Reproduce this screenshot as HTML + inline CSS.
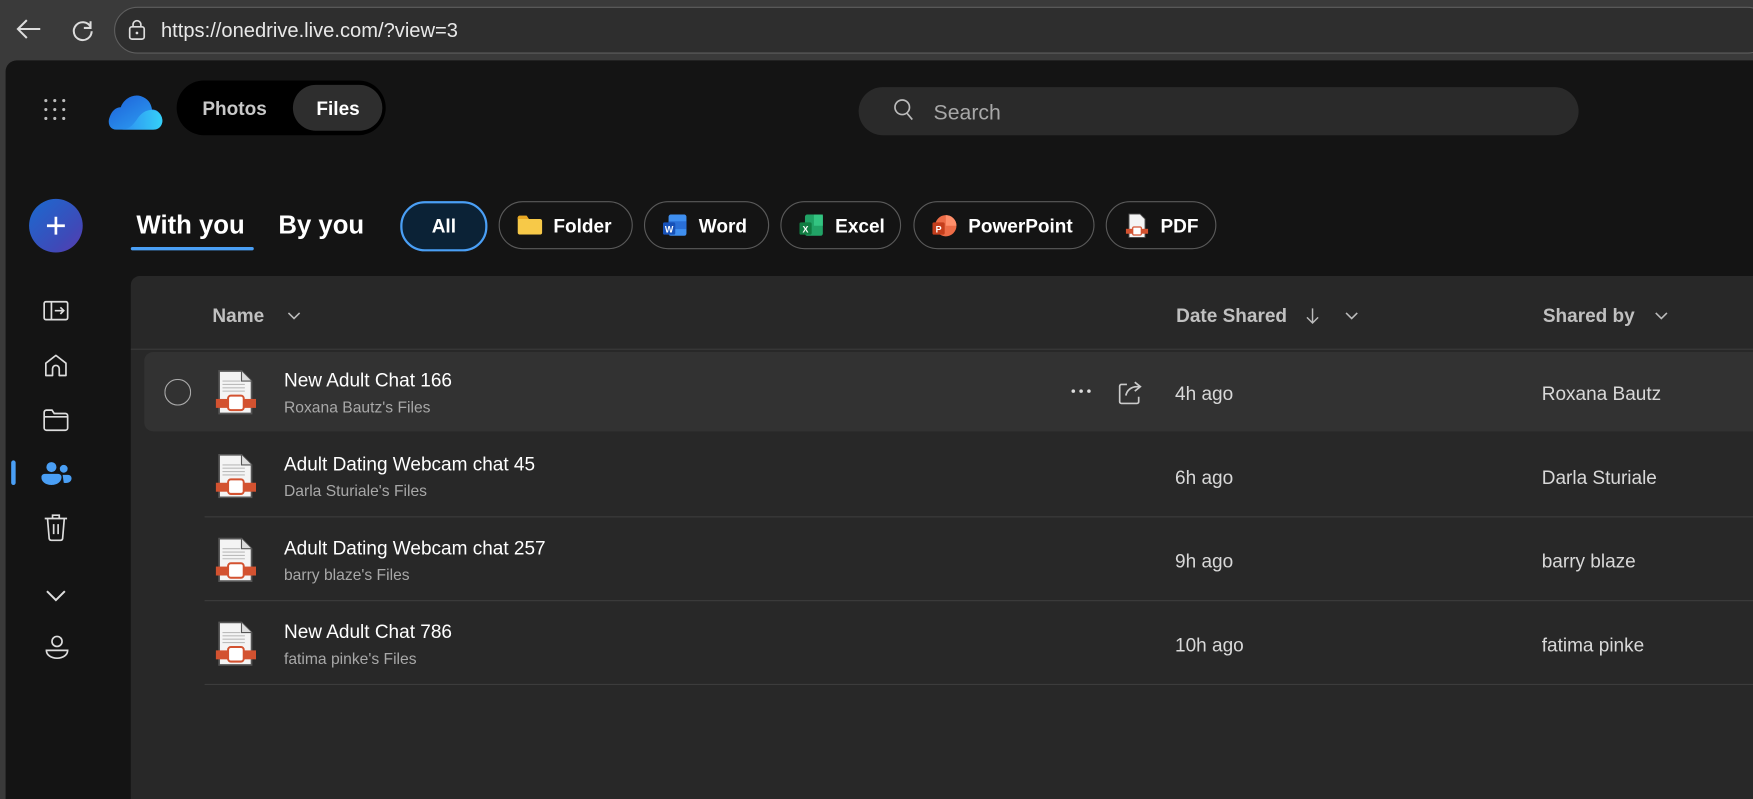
<!DOCTYPE html>
<html><head><meta charset="utf-8"><style>
html,body{margin:0;padding:0;width:1753px;height:799px;overflow:hidden;background:#3a3a3a;font-family:"Segoe UI","Liberation Sans",sans-serif}
#s{position:absolute;left:0;top:0;width:1568px;height:715px;overflow:hidden;transform:scale(1.118,1.1175);transform-origin:0 0;background:#3a3a3a}
.a{position:absolute}
.t{position:absolute;white-space:nowrap;margin-top:2px}
.chip{position:absolute;top:180px;height:41px;border:1px solid #5a5a5a;border-radius:22px;color:#fff;font-weight:bold;font-size:17px;line-height:43px;box-sizing:content-box}
.row .ttl{position:absolute;left:254px;color:#fff;font-size:17px;margin-top:2px}
.row .sub{position:absolute;left:254px;color:#a8a8a8;font-size:14px;margin-top:2px}
.sep{position:absolute;left:183px;right:0;height:1px;background:#3c3c3c}
</style></head><body><div id="s">
<svg class="a" style="left:12px;top:14px" width="28" height="24" viewBox="0 0 28 24"><path d="M24 12H4M12 4L4 12l8 8" stroke="#ddd" stroke-width="1.8" fill="none"/></svg>
<svg class="a" style="left:63px;top:16px" width="22" height="22" viewBox="0 0 22 22"><path d="M18 8A8 8 0 1 0 19 12" stroke="#ddd" stroke-width="1.8" fill="none"/><path d="M18 3v6h-6" stroke="#ddd" stroke-width="1.8" fill="none"/></svg>
<div class="a" style="left:102px;top:6px;width:1480px;height:40px;border:1px solid #5e5e5e;border-radius:21px;background:#2e2e2e"></div>
<svg class="a" style="left:113px;top:16px" width="20" height="22" viewBox="0 0 20 22"><rect x="3" y="8" width="13" height="11" rx="2" stroke="#ddd" stroke-width="1.5" fill="none"/><path d="M6 8V6a3.5 3.5 0 0 1 7 0v2" stroke="#ddd" stroke-width="1.5" fill="none"/><circle cx="9.5" cy="13.5" r="1.2" fill="#ddd"/></svg>
<div class="t" style="left:144px;top:15px;color:#e8e8e8;font-size:18px">https://onedrive.live.com/?view=3</div>
<div class="a" style="left:5px;top:54px;width:1563px;height:661px;background:#141414;border-radius:10px 0 0 0"></div>
<svg class="a" style="left:38px;top:87px" width="22" height="22"><g fill="#bbb"><circle cx="3" cy="3" r="1.4"/><circle cx="11" cy="3" r="1.4"/><circle cx="19" cy="3" r="1.4"/><circle cx="3" cy="11" r="1.4"/><circle cx="11" cy="11" r="1.4"/><circle cx="19" cy="11" r="1.4"/><circle cx="3" cy="19" r="1.4"/><circle cx="11" cy="19" r="1.4"/><circle cx="19" cy="19" r="1.4"/></g></svg>
<svg class="a" style="left:95px;top:82px" width="52" height="36" viewBox="0 0 52 36"><defs><linearGradient id="g1" x1="0" y1="0" x2="1" y2="1"><stop offset="0" stop-color="#1d5fd8"/><stop offset="1" stop-color="#2fa7f5"/></linearGradient><linearGradient id="g2" x1="0" y1="0" x2="1" y2="0"><stop offset="0" stop-color="#2d8df0"/><stop offset="1" stop-color="#35d0f8"/></linearGradient></defs><path d="M9 34C3 34 1 28 3 23C5 17 9 14 13 14C16 6 24 2 31 4C37 6 40 10 41 16C47 16 51 22 50 28C49 32 46 34 42 34Z" fill="url(#g1)"/><path d="M14 34C20 34 24 30 28 24C32 18 38 15 44 17C49 19 51 24 50 28C49 32 46 34 42 34Z" fill="url(#g2)"/></svg>
<div class="a" style="left:158px;top:72px;width:187px;height:49px;background:#000;border-radius:25px"></div>
<div class="a" style="left:262px;top:76px;width:80px;height:41px;background:#2e2e2e;border-radius:21px"></div>
<div class="t" style="left:181px;top:86px;color:#c8c8c8;font-size:17px;font-weight:bold">Photos</div>
<div class="t" style="left:283px;top:86px;color:#fff;font-size:17px;font-weight:bold">Files</div>
<div class="a" style="left:768px;top:78px;width:644px;height:43px;background:#2a2a2a;border-radius:22px"></div>
<svg class="a" style="left:798px;top:88px" width="22" height="22" viewBox="0 0 22 22"><circle cx="9" cy="8" r="6.5" stroke="#bbb" stroke-width="1.5" fill="none"/><path d="M13 13l5 6" stroke="#bbb" stroke-width="1.5"/></svg>
<div class="t" style="left:835px;top:89px;color:#a8a8a8;font-size:19px">Search</div>
<div class="a" style="left:26px;top:178px;width:48px;height:48px;border-radius:50%;background:linear-gradient(135deg,#1b6ad0,#3e4ab8 70%,#5a3bb0)"></div>
<svg class="a" style="left:40px;top:192px" width="20" height="20"><path d="M10 2v16M2 10h16" stroke="#fff" stroke-width="2.4"/></svg>
<div class="t" style="left:122px;top:186px;color:#fff;font-size:23px;font-weight:bold">With you</div>
<div class="a" style="left:117px;top:221px;width:110px;height:3px;background:#4a9ff5;border-radius:2px"></div>
<div class="t" style="left:249px;top:186px;color:#fff;font-size:23px;font-weight:bold">By you</div>
<div class="chip" style="left:358px;width:74px;background:#0b2236;border:2px solid #4a9ff5;line-height:41px;text-align:center">All</div>
<div class="chip" style="left:446px;width:118px"><svg class="a" style="left:16px;top:12px" width="22" height="17"><path d="M0 2a2 2 0 0 1 2-2h6l2 3h10a2 2 0 0 1 2 2v10a2 2 0 0 1-2 2H2a2 2 0 0 1-2-2z" fill="#f7c948"/><path d="M0 2a2 2 0 0 1 2-2h6l2 3H0z" fill="#e9a722"/></svg><span class="a" style="left:48px">Folder</span></div>
<div class="chip" style="left:576px;width:110px"><svg class="a" style="left:16px;top:11px" width="22" height="20"><rect x="5" y="0" width="16" height="19" rx="2" fill="#3f8ff0"/><rect x="5" y="6" width="16" height="7" fill="#2a6fd6"/><rect x="0" y="7" width="11" height="11" rx="1.5" fill="#1751b8"/><text x="5.5" y="16" font-size="8" fill="#fff" text-anchor="middle" font-family="Liberation Sans" font-weight="bold">W</text></svg><span class="a" style="left:48px">Word</span></div>
<div class="chip" style="left:698px;width:106px"><svg class="a" style="left:16px;top:11px" width="22" height="20"><rect x="5" y="0" width="16" height="19" rx="2" fill="#21a366"/><rect x="13" y="0" width="8" height="10" fill="#33c481"/><rect x="0" y="7" width="11" height="11" rx="1.5" fill="#107c41"/><text x="5.5" y="16" font-size="8" fill="#fff" text-anchor="middle" font-family="Liberation Sans" font-weight="bold">X</text></svg><span class="a" style="left:48px">Excel</span></div>
<div class="chip" style="left:817px;width:160px"><svg class="a" style="left:16px;top:11px" width="22" height="20"><circle cx="12" cy="10" r="9.5" fill="#ed6c47"/><path d="M12 .5A9.5 9.5 0 0 1 21.5 10H12z" fill="#ff8f6b"/><rect x="0" y="7" width="11" height="11" rx="1.5" fill="#c43e1c"/><text x="5.5" y="16" font-size="8" fill="#fff" text-anchor="middle" font-family="Liberation Sans" font-weight="bold">P</text></svg><span class="a" style="left:48px">PowerPoint</span></div>
<div class="chip" style="left:989px;width:97px"><svg class="a" style="left:16px;top:10px" width="22" height="22" viewBox="0 0 36 40"><path d="M5 1h18l8 8v30H5z" fill="#f4f4f4" stroke="#555" stroke-width="1.5"/><rect x="0" y="25" width="36" height="8" fill="#d35230"/><rect x="11" y="22" width="14" height="13" rx="2" fill="#fff" stroke="#d35230" stroke-width="2"/></svg><span class="a" style="left:48px">PDF</span></div>
<svg class="a" style="left:38px;top:268px" width="24" height="22" viewBox="0 0 24 22"><rect x="1.5" y="2" width="21" height="16" rx="1.5" stroke="#ddd" stroke-width="1.5" fill="none"/><path d="M8 2v16M11 10h8M16 7l3 3-3 3" stroke="#ddd" stroke-width="1.5" fill="none"/></svg>
<svg class="a" style="left:39px;top:315px" width="22" height="24" viewBox="0 0 22 24"><path d="M2 21V10l9-7 9 7v11h-6v-6a3 3 0 0 0-6 0v6z" stroke="#ddd" stroke-width="1.5" fill="none" stroke-linejoin="round"/></svg>
<svg class="a" style="left:38px;top:365px" width="24" height="22" viewBox="0 0 24 22"><path d="M1.5 4a2 2 0 0 1 2-2h5l2 3h10a2 2 0 0 1 2 2v11a2 2 0 0 1-2 2h-17a2 2 0 0 1-2-2zM1.5 8h21" stroke="#ddd" stroke-width="1.5" fill="none"/></svg>
<div class="a" style="left:10px;top:412px;width:4px;height:22px;background:#4a9ff5;border-radius:2px"></div>
<svg class="a" style="left:37px;top:413px" width="28" height="22" viewBox="0 0 28 22"><circle cx="9" cy="5" r="4.5" fill="#4a9ff5"/><circle cx="20" cy="6.5" r="3.5" fill="#4a9ff5"/><path d="M0 14a3 3 0 0 1 3-3h12a3 3 0 0 1 3 3c0 5-5 7-9 7s-9-2-9-7z" fill="#4a9ff5"/><path d="M19 12h5a3 3 0 0 1 3 3c0 3-3 5-7 4z" fill="#4a9ff5"/></svg>
<svg class="a" style="left:39px;top:459px" width="22" height="26" viewBox="0 0 22 26"><path d="M1 5h20M8 5V2h6v3M3.5 5l1.5 18a2 2 0 0 0 2 1.5h8a2 2 0 0 0 2-1.5L18.5 5M9 10v9M13 10v9" stroke="#ddd" stroke-width="1.5" fill="none"/></svg>
<svg class="a" style="left:40px;top:527px" width="20" height="12"><path d="M2 2l8 8 8-8" stroke="#ddd" stroke-width="1.8" fill="none"/></svg>
<svg class="a" style="left:40px;top:568px" width="22" height="24" viewBox="0 0 22 24"><circle cx="11" cy="6" r="4.5" stroke="#ddd" stroke-width="1.5" fill="none"/><path d="M1.5 14h19c0 4-4 7-9.5 7s-9.5-3-9.5-7z" stroke="#ddd" stroke-width="1.5" fill="none"/></svg>
<div class="a" style="left:117px;top:247px;width:1451px;height:468px;background:#282828;border-radius:8px 0 0 0"></div>
<div class="t" style="left:190px;top:271px;color:#c0c0c0;font-size:17px;font-weight:bold">Name</div>
<svg class="a" style="left:256px;top:278px" width="14" height="10"><path d="M2 2l5 5 5-5" stroke="#bbb" stroke-width="1.4" fill="none"/></svg>
<div class="t" style="left:1052px;top:271px;color:#c0c0c0;font-size:17px;font-weight:bold">Date Shared</div>
<svg class="a" style="left:1167px;top:274px" width="14" height="18"><path d="M7 2v13M2 10l5 5 5-5" stroke="#bbb" stroke-width="1.3" fill="none"/></svg>
<svg class="a" style="left:1202px;top:278px" width="14" height="10"><path d="M2 2l5 5 5-5" stroke="#bbb" stroke-width="1.4" fill="none"/></svg>
<div class="t" style="left:1380px;top:271px;color:#c0c0c0;font-size:17px;font-weight:bold">Shared by</div>
<svg class="a" style="left:1479px;top:278px" width="14" height="10"><path d="M2 2l5 5 5-5" stroke="#bbb" stroke-width="1.4" fill="none"/></svg>
<div class="a" style="left:117px;top:312px;width:1451px;height:1px;background:#3a3a3a"></div>
<div class="a" style="left:129px;top:315px;width:1439px;height:71px;background:#323232;border-radius:8px 0 0 8px"></div>
<svg class="a" style="left:147px;top:339px" width="24" height="24"><circle cx="12" cy="12" r="11.5" stroke="#aaa" stroke-width="1" fill="none"/></svg>
<svg class="a" style="left:957px;top:347px" width="20" height="6"><g fill="#ddd"><circle cx="3" cy="3" r="1.6"/><circle cx="10" cy="3" r="1.6"/><circle cx="17" cy="3" r="1.6"/></g></svg>
<svg class="a" style="left:1000px;top:339px" width="22" height="24" viewBox="0 0 22 24"><path d="M8 5H3a1.5 1.5 0 0 0-1.5 1.5v14A1.5 1.5 0 0 0 3 22h14a1.5 1.5 0 0 0 1.5-1.5V16" stroke="#ccc" stroke-width="1.5" fill="none"/><path d="M7 15c1-5 5-8 10-8h2M15 3l5 4-5 4" stroke="#ccc" stroke-width="1.5" fill="none"/></svg>
<div class="sep" style="top:462px"></div><div class="sep" style="top:537px"></div><div class="sep" style="top:612px"></div>
<div class="row">
<svg class="a" style="left:193px;top:331px" width="36" height="40" viewBox="0 0 36 40"><path d="M3 1h20l9 9v29H3z" fill="#f4f4f4" stroke="#555" stroke-width="1.5"/><path d="M23 1v9h9" fill="#ddd" stroke="#555" stroke-width="1"/><path d="M6 10h16M6 13h20M6 16h20M6 19h20" stroke="#bbb" stroke-width="1"/><rect x="0" y="26" width="36" height="8" fill="#d35230"/><rect x="11" y="23" width="14" height="13" rx="2.5" fill="#fff" stroke="#d35230" stroke-width="1.8"/></svg>
<div class="ttl" style="top:329px">New Adult Chat 166</div><div class="sub" style="top:354px">Roxana Bautz's Files</div>
<div class="t" style="left:1051px;top:341px;color:#d8d8d8;font-size:17px">4h ago</div><div class="t" style="left:1379px;top:341px;color:#d8d8d8;font-size:17px">Roxana Bautz</div>
</div>
<div class="row">
<svg class="a" style="left:193px;top:406px" width="36" height="40" viewBox="0 0 36 40"><path d="M3 1h20l9 9v29H3z" fill="#f4f4f4" stroke="#555" stroke-width="1.5"/><path d="M23 1v9h9" fill="#ddd" stroke="#555" stroke-width="1"/><path d="M6 10h16M6 13h20M6 16h20M6 19h20" stroke="#bbb" stroke-width="1"/><rect x="0" y="26" width="36" height="8" fill="#d35230"/><rect x="11" y="23" width="14" height="13" rx="2.5" fill="#fff" stroke="#d35230" stroke-width="1.8"/></svg>
<div class="ttl" style="top:404px">Adult Dating Webcam chat 45</div><div class="sub" style="top:429px">Darla Sturiale's Files</div>
<div class="t" style="left:1051px;top:416px;color:#d8d8d8;font-size:17px">6h ago</div><div class="t" style="left:1379px;top:416px;color:#d8d8d8;font-size:17px">Darla Sturiale</div>
</div>
<div class="row">
<svg class="a" style="left:193px;top:481px" width="36" height="40" viewBox="0 0 36 40"><path d="M3 1h20l9 9v29H3z" fill="#f4f4f4" stroke="#555" stroke-width="1.5"/><path d="M23 1v9h9" fill="#ddd" stroke="#555" stroke-width="1"/><path d="M6 10h16M6 13h20M6 16h20M6 19h20" stroke="#bbb" stroke-width="1"/><rect x="0" y="26" width="36" height="8" fill="#d35230"/><rect x="11" y="23" width="14" height="13" rx="2.5" fill="#fff" stroke="#d35230" stroke-width="1.8"/></svg>
<div class="ttl" style="top:479px">Adult Dating Webcam chat 257</div><div class="sub" style="top:504px">barry blaze's Files</div>
<div class="t" style="left:1051px;top:491px;color:#d8d8d8;font-size:17px">9h ago</div><div class="t" style="left:1379px;top:491px;color:#d8d8d8;font-size:17px">barry blaze</div>
</div>
<div class="row">
<svg class="a" style="left:193px;top:556px" width="36" height="40" viewBox="0 0 36 40"><path d="M3 1h20l9 9v29H3z" fill="#f4f4f4" stroke="#555" stroke-width="1.5"/><path d="M23 1v9h9" fill="#ddd" stroke="#555" stroke-width="1"/><path d="M6 10h16M6 13h20M6 16h20M6 19h20" stroke="#bbb" stroke-width="1"/><rect x="0" y="26" width="36" height="8" fill="#d35230"/><rect x="11" y="23" width="14" height="13" rx="2.5" fill="#fff" stroke="#d35230" stroke-width="1.8"/></svg>
<div class="ttl" style="top:554px">New Adult Chat 786</div><div class="sub" style="top:579px">fatima pinke's Files</div>
<div class="t" style="left:1051px;top:566px;color:#d8d8d8;font-size:17px">10h ago</div><div class="t" style="left:1379px;top:566px;color:#d8d8d8;font-size:17px">fatima pinke</div>
</div>
</div></body></html>
